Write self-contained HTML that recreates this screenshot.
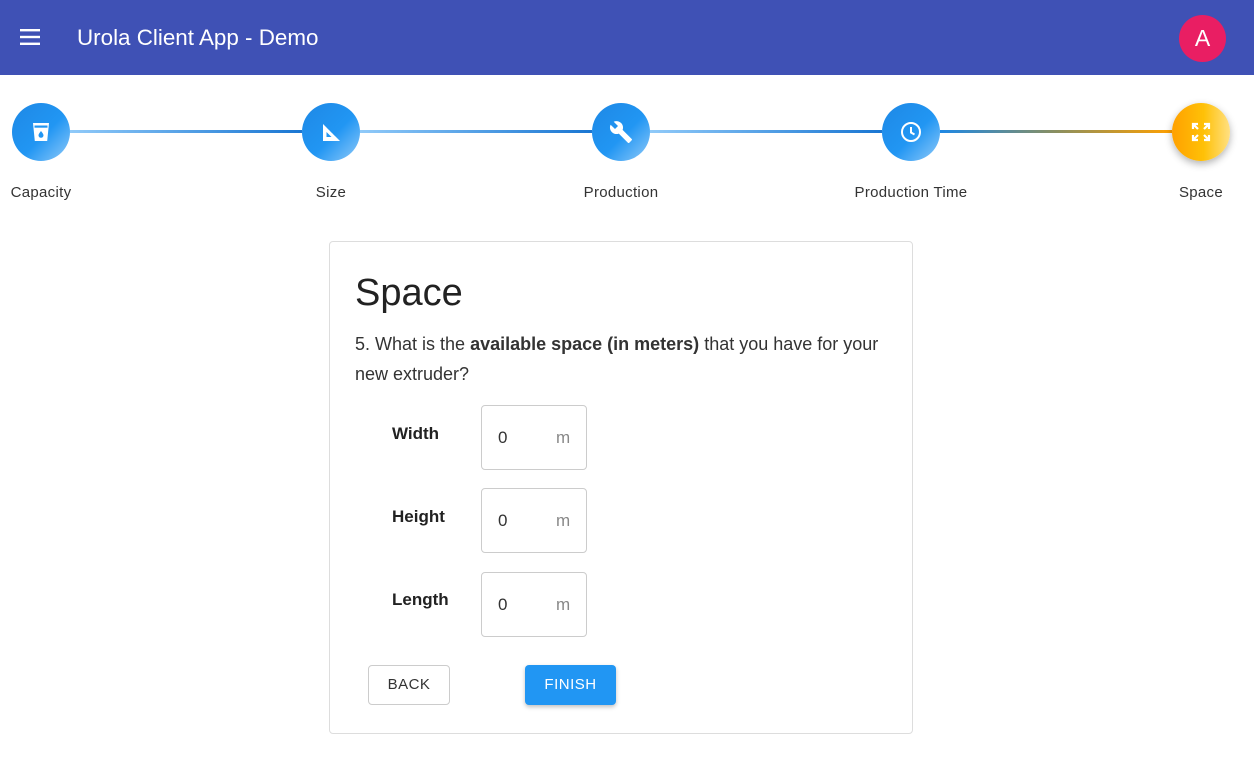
<!DOCTYPE html>
<html><head><meta charset="utf-8"><style>
*{box-sizing:border-box;margin:0;padding:0}
body{width:1254px;height:757px;background:#fff;font-family:"Liberation Sans",Arial,sans-serif;position:relative;overflow:hidden;color:#222}
.hdr{position:absolute;left:0;top:0;width:1254px;height:75px;background:#3f51b5}
.hdr .t{position:absolute;left:77px;top:25px;color:#fff;font-size:22.4px}
.av{position:absolute;left:1179px;top:15px;width:47px;height:47px;border-radius:50%;background:#e91e63;color:#fff;font-size:23px;text-align:center;line-height:47px}
.c{position:absolute;top:103px;width:58px;height:58px;border-radius:50%;background:linear-gradient(135deg,#1e88e5 0%,#2196f3 55%,#90caf9 100%);display:flex;align-items:center;justify-content:center}
.c.o{background:linear-gradient(90deg,#ffa000 0%,#ffc107 55%,#ffe082 100%);box-shadow:0 3px 8px rgba(0,0,0,.3)}
.ln{position:absolute;top:130px;height:3px;background:linear-gradient(90deg,#90caf9,#1976d2)}
.lb{position:absolute;top:184px;font-size:15px;color:#333;width:160px;text-align:center;letter-spacing:.3px}
.card{position:absolute;left:329px;top:241px;width:584px;height:493px;border:1px solid #ddd;border-radius:4px}
h1{position:absolute;left:355px;top:272px;font-size:38px;font-weight:normal;color:#222}
.q{position:absolute;left:355px;top:329px;width:540px;font-size:18px;line-height:30px;color:#333}
.fl{position:absolute;left:392px;font-size:17px;font-weight:bold;color:#222}
.in{position:absolute;left:481px;width:106px;height:65px;border:1px solid #ccc;border-radius:4px;font-size:17px}
.in .v{position:absolute;left:16px;top:22px;color:#333}
.in .m{position:absolute;left:74px;top:22px;color:#888}
.btn{position:absolute;top:665px;height:40px;border-radius:4px;font-size:15px;text-align:center;line-height:40px;letter-spacing:.5px}
</style></head><body>
<div class="hdr">
<svg style="position:absolute;left:19px;top:27px" width="22" height="20" viewBox="0 0 22 20"><rect x="1" y="2" width="20" height="2.4" fill="#fff"/><rect x="1" y="8.8" width="20" height="2.4" fill="#fff"/><rect x="1" y="15.6" width="20" height="2.4" fill="#fff"/></svg>
<div class="t">Urola Client App - Demo</div>
<div class="av">A</div>
</div>

<div class="ln" style="left:70px;width:232px"></div>
<div class="ln" style="left:360px;width:232px"></div>
<div class="ln" style="left:650px;width:232px"></div>
<div class="ln" style="left:940px;width:232px;background:linear-gradient(90deg,#1e88e5,#8a8f60 50%,#ffa000)"></div>

<div class="c" style="left:12px"><svg width="20" height="22" viewBox="0 0 20 22"><path d="M2 2h16l-1.8 18H3.8z" fill="#fff"/><rect x="3.5" y="4.5" width="13" height="2.2" fill="#2196f3"/><path d="M10 10c1.6 2.1 2.5 3.2 2.5 4.3a2.5 2.5 0 0 1-5 0c0-1.1.9-2.2 2.5-4.3z" fill="#2196f3"/></svg></div>
<div class="c" style="left:302px"><svg width="22" height="22" viewBox="0 0 22 22"><path d="M3 3l17 17H3z" fill="#fff"/><path d="M6.5 11l5 5h-5z" fill="#2196f3"/><path d="M8 8l1.5-1.5M11 11l1.5-1.5M14 14l1.5-1.5" stroke="#2196f3" stroke-width="1"/></svg></div>
<div class="c" style="left:592px"><svg width="24" height="24" viewBox="0 0 24 24"><path fill="#fff" d="M22.7 19l-9.1-9.1c.9-2.3.4-5-1.5-6.9-2-2-5-2.4-7.4-1.3L9 6 6 9 1.6 4.7C.4 7.1.9 10.1 2.9 12.1c1.9 1.9 4.6 2.4 6.9 1.5l9.1 9.1c.4.4 1 .4 1.4 0l2.3-2.3c.5-.4.5-1.1.1-1.4z"/></svg></div>
<div class="c" style="left:882px"><svg width="24" height="24" viewBox="0 0 24 24"><circle cx="12" cy="12" r="9" fill="none" stroke="#fff" stroke-width="2"/><path d="M12 7v5.5l3.5 2" fill="none" stroke="#fff" stroke-width="2"/></svg></div>
<div class="c o" style="left:1172px"><svg width="20" height="20" viewBox="0 0 20 20" fill="none" stroke="#fff" stroke-width="2.2"><path d="M2 7V2h5M2 2l5 5M18 7V2h-5M18 2l-5 5M2 13v5h5M2 18l5-5M18 13v5h-5M18 18l-5-5"/></svg></div>

<div class="lb" style="left:-39px">Capacity</div>
<div class="lb" style="left:251px">Size</div>
<div class="lb" style="left:541px">Production</div>
<div class="lb" style="left:831px">Production Time</div>
<div class="lb" style="left:1121px">Space</div>

<div class="card"></div>
<h1>Space</h1>
<div class="q">5. What is the <b>available space (in meters)</b> that you have for your new extruder?</div>

<div class="fl" style="top:424px">Width</div>
<div class="in" style="top:405px"><span class="v">0</span><span class="m">m</span></div>
<div class="fl" style="top:507px">Height</div>
<div class="in" style="top:488px"><span class="v">0</span><span class="m">m</span></div>
<div class="fl" style="top:590px">Length</div>
<div class="in" style="top:572px"><span class="v">0</span><span class="m">m</span></div>

<div class="btn" style="left:368px;width:82px;border:1px solid #ccc;color:#333;line-height:38px">BACK</div>
<div class="btn" style="left:525px;width:91px;background:#2196f3;color:#fff;box-shadow:0 2px 4px rgba(0,0,0,.25)">FINISH</div>
</body></html>
